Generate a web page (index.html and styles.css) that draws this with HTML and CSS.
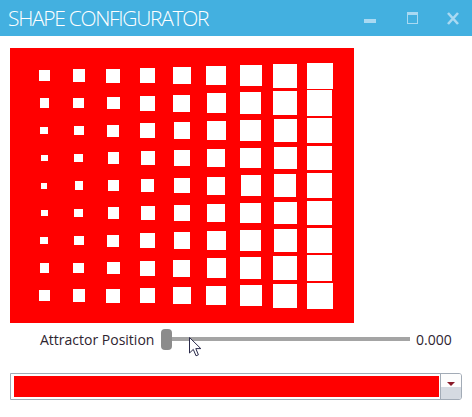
FILE: index.html
```html
<!DOCTYPE html>
<html lang="en">
<head>
  <meta charset="UTF-8">
  <title>Shape Configurator</title>
  <link rel="stylesheet" href="styles.css">
</head>
<body>

  <!-- Заголовок вікна -->
  <div class="titlebar">
    <span class="title">SHAPE CONFIGURATOR</span>
    <div class="win-buttons">
      <span class="win-btn"><span class="min-bar"></span></span>
      <span class="win-btn"><span class="max-box"></span></span>
      <span class="win-btn close">
        <svg width="12" height="13" viewBox="0 0 12 13">
          <path d="M1 1 L11 12 M11 1 L1 12" stroke="#a9d9f2" stroke-width="2.6"/>
        </svg>
      </span>
    </div>
  </div>

  <div class="main">
    <!-- Полотно з квадратами -->
    <div class="canvas" id="canvas"></div>

    <!-- Повзунок -->
    <div class="slider-row">
      <span class="slider-label">Attractor Position</span>
      <div class="slider">
        <span class="thumb"></span>
        <span class="track"></span>
      </div>
      <span class="slider-value">0.000</span>
    </div>

    <!-- Вибір кольору -->
    <div class="combo">
      <div class="combo-swatch"></div>
      <div class="combo-btn"><span class="arrow"></span></div>
    </div>
  </div>

  <svg class="cursor" width="13" height="20" viewBox="0 0 13 20">
    <path d="M0.5 0.5 L0.5 16 L4.3 12.4 L7 18.8 L9.4 17.8 L6.8 11.6 L11.8 11.6 Z" fill="#fff" stroke="#2a2a4a" stroke-width="1"/>
  </svg>

  <script>
    // Розміри квадратів: по колонках, для крайніх і середнього рядка
    const maxSize = [11.7, 12.3, 14, 15.7, 17.7, 19.7, 21.7, 24, 26];
    const minSize = [6, 8.3, 11, 13.7, 15.7, 18, 20.3, 22.7, 24.7];
    const canvas = document.getElementById('canvas');
    for (let r = 0; r < 9; r++) {
      const f = Math.pow(Math.abs(r - 4) / 4, 1.6);
      for (let c = 0; c < 9; c++) {
        const s = (minSize[c] + (maxSize[c] - minSize[c]) * f).toFixed(1);
        const cell = document.createElement('div');
        cell.className = 'cell';
        const sq = document.createElement('div');
        sq.className = 'square';
        sq.style.width = s + 'px';
        sq.style.height = s + 'px';
        cell.appendChild(sq);
        canvas.appendChild(cell);
      }
    }
  </script>
</body>
</html>
```

FILE: styles.css
```css
body { margin: 0; background: #fff; font-family: "Open Sans", sans-serif; position: relative; }

.titlebar { height: 36px; background: #43b0e0; display: flex; align-items: center; padding-left: 8px; }
.title { color: #fff; font-size: 21px; font-weight: 300; letter-spacing: -1.3px; flex: 1; line-height: 36px; }
.win-buttons { display: flex; align-items: center; }
.win-btn { width: 42px; height: 36px; display: flex; align-items: center; justify-content: center; }
.win-btn.close { width: 39px; }
.min-bar { width: 12px; height: 4px; background: #a9d9f2; margin-top: 6px; }
.max-box { width: 9px; height: 8px; border: 1px solid #a9d9f2; border-top-width: 3px; }

.main { padding: 12px 10px 0; }

.canvas { width: 344px; height: 275px; background: #ff0000; box-sizing: border-box; padding: 13.75px 17.2px;
  display: grid; grid-template-columns: repeat(9, 34.4px); grid-template-rows: repeat(9, 27.5px); }
.cell { display: flex; align-items: center; justify-content: center; }
.square { background: #fff; }

.slider-row { display: flex; align-items: center; height: 30px; margin-top: 1px; padding-left: 30px; }
.slider-label { font-size: 14px; color: #2e2430; width: 121px; }
.slider { display: flex; align-items: center; width: 249px; }
.thumb { width: 11px; height: 21px; border-radius: 4px; background: #8c8c8c; flex: none; }
.track { flex: 1; height: 4px; background: #a4a4a4; }
.slider-value { font-size: 14px; color: #2e2430; margin-left: 6px; }

.combo { display: flex; margin-top: 19px; height: 27px; box-sizing: border-box; border: 1px solid #a2abb6; border-radius: 0 3px 3px 0; }
.combo-swatch { flex: 1; margin: 2px 1px 2px 3px; background: #ff0000; }
.combo-btn { width: 20px; border-left: 1px solid #a2abb6; border-radius: 0 2px 2px 0;
  background: linear-gradient(#fdfdfd 50%, #d5dae1 50%); display: flex; align-items: center; justify-content: center; }
.arrow { width: 0; height: 0; border-left: 4px solid transparent; border-right: 4px solid transparent; border-top: 4px solid #8a1a28; margin-top: -5px; }

.cursor { position: absolute; left: 189px; top: 337px; }
```
